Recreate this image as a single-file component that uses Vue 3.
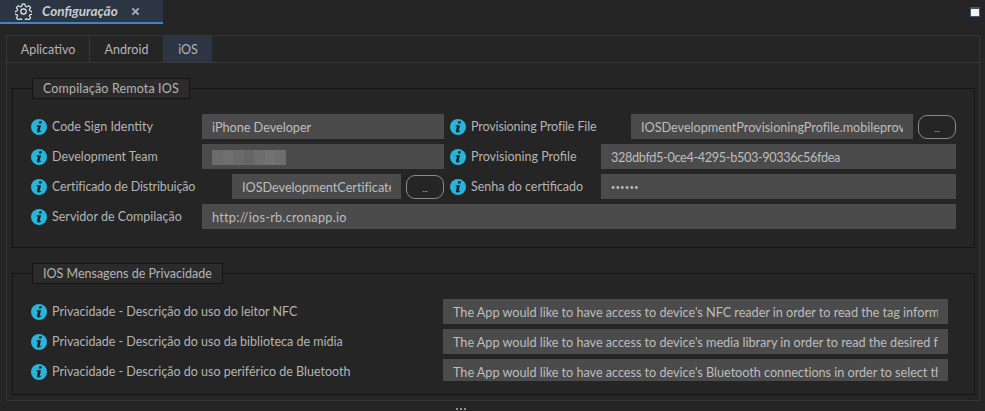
<script setup>
const privacy = [
  { label: 'Privacidade - Descrição do uso do leitor NFC', value: "The App would like to have access to device's NFC reader in order to read the tag information" },
  { label: 'Privacidade - Descrição do uso da biblioteca de mídia', value: "The App would like to have access to device's media library in order to read the desired file" },
  { label: 'Privacidade - Descrição do uso periférico de Bluetooth', value: "The App would like to have access to device's Bluetooth connections in order to select the device" }
]
const blur = ['#6c6c6c', '#6f6f6f', '#6a6a6a', '#666666', '#6d6d6d', '#727272', '#6e6e6e']
</script>

<template>
  <div class="page">
    <svg class="defs" width="0" height="0" aria-hidden="true">
      <symbol id="info" viewBox="0 0 16 16">
        <circle cx="8" cy="8" r="8" fill="#27b5dc" />
        <path d="M8.300 2.300h2.600l-.5 2.300H7.800zM5.800 6.300h4.200L8.700 11.800c-.1.400.1.500.4.300l.8-.5.300.7c-1 .8-1.900 1.200-2.900 1.200-1.100 0-1.600-.6-1.300-1.700l1-4.300-1.300-.1z" fill="#202020" />
      </symbol>
    </svg>

    <header class="topbar">
      <div class="doc-tab">
        <svg class="gear" viewBox="0 0 24 24" fill="none" stroke="#f0f0f0" stroke-width="1.600" stroke-linejoin="round">
          <circle cx="12" cy="12" r="3.800" />
          <path d="M10 1.500h4l.6 3.100 2 .9 2.700-1.800 2.800 2.800-1.800 2.700.9 2 3.100.6v4l-3.100.6-.9 2 1.800 2.700-2.800 2.800-2.700-1.800-2 .9-.6 3.100h-4l-.6-3.100-2-.9-2.700 1.800-2.800-2.800 1.800-2.700-.9-2-3.100-.6v-4l3.100-.6.9-2-1.800-2.700 2.800-2.800 2.700 1.800 2-.9z" />
        </svg>
        <span class="doc-title">Configuração</span>
        <svg class="close" viewBox="0 0 10 10" stroke="#a9adb3" stroke-width="2.200">
          <path d="M1.500 1.500l7 7M8.500 1.500l-7 7" />
        </svg>
      </div>
      <span class="maximize"></span>
    </header>

    <section class="panel">
      <nav class="tabs">
        <span class="tab tab-app">Aplicativo</span>
        <span class="tab tab-android">Android</span>
        <span class="tab tab-ios">iOS</span>
      </nav>

      <div class="panel-body">
        <fieldset class="group">
          <legend class="legend-first">Compilação Remota IOS</legend>
          <div class="row">
            <div class="field left">
              <svg class="info"><use href="#info" /></svg>
              <span class="label">Code Sign Identity</span>
              <input class="input caps" readonly value="iPhone Developer" />
            </div>
            <div class="field">
              <svg class="info"><use href="#info" /></svg>
              <span class="label right-wide tight">Provisioning Profile File</span>
              <input class="input caps" readonly value="IOSDevelopmentProvisioningProfile.mobileprovision" />
              <button class="pick">...</button>
            </div>
          </div>
          <div class="row">
            <div class="field left">
              <svg class="info"><use href="#info" /></svg>
              <span class="label">Development Team</span>
              <div class="input blurred">
                <i v-for="(c, n) in blur" :key="n" class="blur-cell" :style="{ background: c }"></i>
              </div>
            </div>
            <div class="field">
              <svg class="info"><use href="#info" /></svg>
              <span class="label right">Provisioning Profile</span>
              <input class="input uuid" readonly value="328dbfd5-0ce4-4295-b503-90336c56fdea" />
            </div>
          </div>
          <div class="row">
            <div class="field left">
              <svg class="info"><use href="#info" /></svg>
              <span class="label left-wide tight">Certificado de Distribuição</span>
              <input class="input caps" readonly value="IOSDevelopmentCertificate.p12" />
              <button class="pick">...</button>
            </div>
            <div class="field">
              <svg class="info"><use href="#info" /></svg>
              <span class="label right">Senha do certificado</span>
              <input class="input secret" type="password" readonly value="123456" />
            </div>
          </div>
          <div class="row">
            <div class="field wide">
              <svg class="info"><use href="#info" /></svg>
              <span class="label">Servidor de Compilação</span>
              <input class="input url" readonly value="http://ios-rb.cronapp.io" />
            </div>
          </div>
        </fieldset>

        <fieldset class="group privacy">
          <legend>IOS Mensagens de Privacidade</legend>
          <div v-for="item in privacy" :key="item.label" class="row">
            <div class="field wide">
              <svg class="info"><use href="#info" /></svg>
              <span class="label privacy-label">{{ item.label }}</span>
              <input class="input message" readonly :value="item.value" />
            </div>
          </div>
        </fieldset>
      </div>
    </section>

    <div class="splitter">
      <i></i><i></i><i></i>
    </div>
  </div>
</template>

<style scoped>
.page {
  width: 985px;
  height: 411px;
  overflow: hidden;
  background: #252525;
  color: #b4b4b4;
  font-family: "Lato", "Open Sans", sans-serif;
  font-size: 12.500px;
  box-sizing: border-box;
}
.defs { position: absolute; }
.topbar {
  height: 24px;
  display: flex;
  justify-content: space-between;
  align-items: center;
}
.doc-tab {
  width: 163px;
  height: 24px;
  box-sizing: border-box;
  background: #2c3544;
  border-bottom: 2px solid #3d86c6;
  display: flex;
  align-items: center;
  padding-left: 15px;
}
.gear { width: 17px; height: 17px; }
.doc-title {
  margin-left: 10px;
  font-style: italic;
  font-weight: 700;
  color: #c9ccd1;
  font-size: 13.500px;
}
.close { width: 9px; height: 9px; margin-left: 13px; }
.maximize {
  width: 10px;
  height: 10px;
  margin-right: 5px;
  background: #f2f2f2;
  border: 1px solid #4a5468;
  border-top-width: 2px;
  box-sizing: border-box;
}
.panel {
  margin: 11px 5px 0 6px;
  height: 366px;
  box-sizing: border-box;
  border: 1px solid #353535;
}
.tabs {
  height: 27px;
  box-sizing: border-box;
  border-bottom: 1px solid #383838;
  display: flex;
}
.tab {
  display: flex;
  align-items: center;
  justify-content: center;
  box-sizing: border-box;
  border-right: 1px solid #383838;
}
.tab-app { width: 83px; }
.tab-android { width: 74px; }
.tab-ios { width: 48px; background: #2c3544; border-right: 0; }
.panel-body { padding: 15px 4px 0 5px; }
.group {
  margin: 0;
  padding: 15px 18px 13px 18px;
  border: 1px solid #141414;
  min-width: 0;
}
.group + .group { margin-top: 15px; }
legend {
  margin-left: 1px;
  padding: 0 10px;
  height: 21px;
  box-sizing: border-box;
  line-height: 19px;
  border: 1px solid #141414;
  background: #2b2b2b;
  color: #b4b4b4;
}
.legend-first { letter-spacing: 0.15px; }
.row {
  display: flex;
  gap: 6px;
  height: 25px;
  margin-bottom: 5px;
}
.field {
  flex: 1;
  min-width: 0;
  display: flex;
  align-items: center;
}
.field.left { flex: 0 0 413px; }
.info { width: 16px; height: 16px; flex: none; margin-right: 5px; }
.label { flex: 0 0 150px; white-space: nowrap; margin-top: -1px; }
.label.tight { letter-spacing: -0.12px; }
.label.left-wide { flex-basis: 180px; }
.label.right { flex-basis: 130px; }
.label.right-wide { flex-basis: 160px; }
.label.privacy-label { flex-basis: 391px; }
.input {
  flex: 1;
  min-width: 0;
  width: 0;
  height: 25px;
  box-sizing: border-box;
  border: 0;
  outline: 0;
  margin: 0;
  padding: 1px 10px 0;
  background: #4b4b4b;
  color: #bdbdbd;
  font: inherit;
  font-size: 12.700px;
}
.caps { letter-spacing: -0.03px; }
.uuid { letter-spacing: -0.35px; }
.url { letter-spacing: 0.25px; }
.message { letter-spacing: -0.04px; }
.secret { font-size: 7px; letter-spacing: 0.6px; }
.blurred {
  display: flex;
  align-items: center;
}
.blur-cell {
  display: block;
  width: 10.500px;
  height: 15px;
}
.pick {
  flex: none;
  width: 38px;
  height: 24px;
  margin-left: 5px;
  padding: 5px 0 0;
  background: #252525;
  border: 1px solid #8a8a8a;
  border-radius: 9px;
  color: #eed28a;
  font: inherit;
  font-size: 7px;
  line-height: 16px;
}
.privacy { padding: 15px 18px 0; height: 132px; box-sizing: border-box; }
.privacy .row:last-child { margin-bottom: 0; }
.privacy .row:last-child .input { height: 22px; padding-top: 3px; align-self: flex-start; }
.privacy .field { padding-right: 8px; }
.splitter {
  display: flex;
  justify-content: center;
  gap: 2px;
  padding-top: 7px;
  padding-right: 63px;
}
.splitter i {
  display: block;
  width: 2px;
  height: 2px;
  background: #8f8f8f;
}
</style>
